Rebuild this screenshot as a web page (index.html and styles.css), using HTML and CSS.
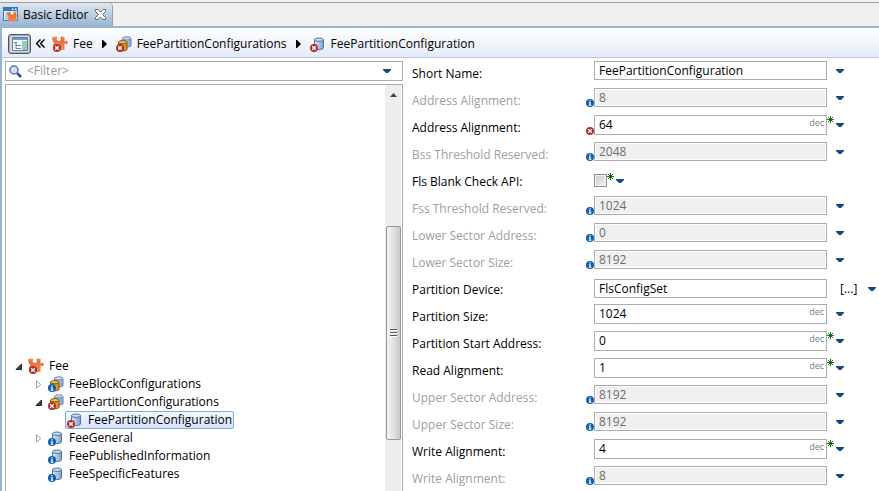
FILE: index.html
```html
<!DOCTYPE html>
<html lang="en">
<head>
<meta charset="utf-8">
<title>Basic Editor</title>
<link rel="stylesheet" href="styles.css">
</head>
<body>
<svg class="defs" aria-hidden="true">
  <defs>
    <linearGradient id="blue" x1="0" x2="1" y1="0" y2="0"><stop offset="0" stop-color="#dce8f7"/><stop offset="1" stop-color="#7d9fcd"/></linearGradient>
    <linearGradient id="gold" x1="0" x2="1" y1="0" y2="0"><stop offset="0" stop-color="#f6c645"/><stop offset="1" stop-color="#c98a12"/></linearGradient>
    <linearGradient id="orange" x1="0" x2="0" y1="0" y2="1"><stop offset="0" stop-color="#e0672f"/><stop offset="1" stop-color="#f58a4e"/></linearGradient>
  </defs>
  <symbol id="error" viewBox="0 0 8 8"><circle cx="4" cy="4" r="4" fill="#b32d2d"/><path d="M2.2 2.2l3.6 3.6M5.8 2.2L2.2 5.8" stroke="#fff" stroke-width="1.3"/></symbol>
  <symbol id="info" viewBox="0 0 8 8"><circle cx="4" cy="4" r="4" fill="#0f5fb4"/><path d="M3.4 1.2h1.300v1.300H3.4zM2.800 3.200h1.900v2.600h.7v1H2.700v-1h.7V4.200h-.6z" fill="#fff"/></symbol>
  <symbol id="puzzle" viewBox="0 0 16 16"><path d="M0 1.500L4 .5l1 .7-.5 2.300L6 5h1.500L9 3.500 8.500 1.200l1-.7L12.500 1v4.500h.7c.4-1 2.600-.9 2.600 1s-2.200 2-2.600 1h-.7V14H9L8 12.500H6.500L5.500 14H1V9l1-.5V6.500L1 6z" fill="url(#orange)"/><path d="M1.500 2.300L4 1.600M10 1.800l1.800.3" stroke="#f9ac7c"/></symbol>
  <symbol id="cyl" viewBox="0 0 16 16"><path d="M4.500 3.500v8.200c0 1.100 2 1.800 4.500 1.800s4.500-.7 4.500-1.800V3.500z" fill="url(#blue)" stroke="#51709f"/><ellipse cx="9" cy="3.700" rx="4.500" ry="1.700" fill="#c9dcf2" stroke="#51709f"/></symbol>
  <symbol id="cyls" viewBox="0 0 16 16"><path d="M6.500 2.500v7c0 1 2 1.500 4.200 1.500s4.300-.5 4.300-1.500v-7z" fill="url(#blue)" stroke="#6884ae"/><ellipse cx="10.750" cy="2.400" rx="4.250" ry="1.600" fill="#c9dcf2" stroke="#6884ae"/><path d="M2.500 6.300v7c0 1 2 1.500 4.200 1.500s4.300-.5 4.300-1.500v-7z" fill="url(#gold)" stroke="#80560f"/><ellipse cx="6.750" cy="6.200" rx="4.250" ry="1.600" fill="#f2c65b" stroke="#80560f"/></symbol>
  <symbol id="puzzle-error" viewBox="0 0 16 16"><use href="#puzzle" width="16" height="16"/><use href="#error" x="1" y="8" width="8" height="8"/></symbol>
  <symbol id="cyl-error" viewBox="0 0 16 16"><use href="#cyl" width="16" height="16"/><use href="#error" x="0" y="8" width="8" height="8"/></symbol>
  <symbol id="cyl-info" viewBox="0 0 16 16"><use href="#cyl" width="16" height="16"/><use href="#info" x="0" y="8" width="8" height="8"/></symbol>
  <symbol id="cyls-error" viewBox="0 0 16 16"><use href="#cyls" width="16" height="16"/><use href="#error" x="0" y="8" width="8" height="8"/></symbol>
  <symbol id="cyls-info" viewBox="0 0 16 16"><use href="#cyls" width="16" height="16"/><use href="#info" x="0" y="8" width="8" height="8"/></symbol>
  <symbol id="star" viewBox="0 0 7 7"><path d="M3.500 0v7M0 3.500h7M1 1l5 5M6 1L1 6" stroke="#137313" stroke-width="1"/></symbol>
  <symbol id="down" viewBox="0 0 8 4"><path d="M0 0h8v1L5 4H3L0 1z" fill="#174a80"/></symbol>
  <symbol id="next" viewBox="0 0 5 8"><path d="M0 0h1l4 4-4 4H0z" fill="#000"/></symbol>
  <symbol id="open" viewBox="0 0 8 9"><path d="M6.500 2v5.500H1z" fill="#404040" stroke="#222"/></symbol>
  <symbol id="closed" viewBox="0 0 8 9"><path d="M1.500.8v7.400L5.800 4.500z" fill="#fff" stroke="#a0a0a0"/></symbol>
</svg>

<header class="tabs">
  <div class="tab">
    <svg class="icon" viewBox="0 0 16 16"><rect x=".5" y=".5" width="14" height="13" fill="#e8f4fc" stroke="#3b78b8"/><path d="M0 0h15v4H0z" fill="#3479bd"/><path d="M9 1.500h1.500v1.500H9zM12 1.500h1.500v1.500H12z" fill="#fff"/><path d="M2 5.500h3v7H2z" fill="#a5d3f0"/><use href="#puzzle" x="4" y="4" width="12" height="12"/></svg>
    <span>Basic Editor</span>
    <button class="close" aria-label="Close"><svg width="11" height="11" viewBox="0 0 11 11"><path d="M.5.500h2.500l2.500 2.500L8 .500h2.500v2L7.500 5.500l3 3v2H8L5.500 8 3 10.500H.500v-2l3-3-3-3z" fill="#fff" stroke="#666"/></svg></button>
  </div>
</header>

<main class="editor">
  <nav class="crumbs">
    <button class="toggle" aria-label="Show tree"><svg width="16" height="14" viewBox="0 0 16 14"><path d="M.5.500h15v13H.500z" fill="#fff" stroke="#6080a8"/><path d="M1 1h14v2H1z" fill="#6f9bd0"/><path d="M10 4h5v9h-5z" fill="#9bcdb4"/><path d="M2 5.500h3M4 6v5.500M4 8.500h5M4 11.500h5" stroke="#5185b8" fill="none"/></svg></button>
    <button class="back" aria-label="Back"><svg width="9" height="9" viewBox="0 0 9 9"><path d="M4.500.5l-4 4 4 4M8.500.5l-4 4 4 4" fill="none" stroke="#000" stroke-width="1.500"/></svg></button>
    <a class="crumb" href="#fee"><svg class="icon"><use href="#puzzle-error"/></svg>Fee</a>
    <svg class="next"><use href="#next"/></svg>
    <a class="crumb" href="#configs"><svg class="icon"><use href="#cyls-error"/></svg>FeePartitionConfigurations</a>
    <svg class="next"><use href="#next"/></svg>
    <a class="crumb" href="#config"><svg class="icon"><use href="#cyl-error"/></svg>FeePartitionConfiguration</a>
  </nav>

  <div class="panes">
    <section class="outline">
      <div class="filter">
        <svg width="13" height="13" viewBox="0 0 13 13"><path d="M8 8l4 4" stroke="#2f4f9c" stroke-width="2.500"/><circle cx="5" cy="5" r="4" fill="#cfe0f6" stroke="#5a78b4" stroke-width="1.500"/><path d="M3 4.500L4.500 3" stroke="#fff"/></svg>
        <input type="text" aria-label="Filter" placeholder="&lt;Filter&gt;">
        <button class="drop" aria-label="Filter history"><svg><use href="#down"/></svg></button>
      </div>
      <div class="treebox">
        <ul class="tree">
          <li id="fee"><svg class="exp"><use href="#open"/></svg><svg class="icon"><use href="#puzzle-error"/></svg><span>Fee</span></li>
          <li class="sub"><svg class="exp"><use href="#closed"/></svg><svg class="icon"><use href="#cyls-info"/></svg><span>FeeBlockConfigurations</span></li>
          <li class="sub" id="configs"><svg class="exp"><use href="#open"/></svg><svg class="icon"><use href="#cyls-error"/></svg><span>FeePartitionConfigurations</span></li>
          <li class="leaf" id="config"><svg class="icon"><use href="#cyl-error"/></svg><span>FeePartitionConfiguration</span></li>
          <li class="sub"><svg class="exp"><use href="#closed"/></svg><svg class="icon"><use href="#cyl-info"/></svg><span>FeeGeneral</span></li>
          <li class="sub"><svg class="exp"></svg><svg class="icon"><use href="#cyl-info"/></svg><span>FeePublishedInformation</span></li>
          <li class="sub"><svg class="exp"></svg><svg class="icon"><use href="#cyl-info"/></svg><span>FeeSpecificFeatures</span></li>
        </ul>
        <div class="scroll">
          <svg class="up" viewBox="0 0 7 4"><path d="M0 4l3.500-4L7 4z" fill="#444"/></svg>
          <div class="thumb"><svg width="7" height="8" viewBox="0 0 7 8"><path d="M0 .500h7M0 3.500h7M0 6.500h7" stroke="#555"/><path d="M0 1.500h7M0 4.500h7M0 7.500h7" stroke="#fff"/></svg></div>
        </div>
      </div>
    </section>
    <form class="form" id="form"></form>
  </div>
</main>
<script src="form.js"></script>
</body>
</html>
```
FILE: form.js
```js
// kind: text, info (read-only default), dec (decimal entry), check, ref
const fields = [
  { label: "Short Name:", value: "FeePartitionConfiguration", kind: "text" },
  { label: "Address Alignment:", value: "8", kind: "info" },
  { label: "Address Alignment:", value: "64", kind: "dec", error: true, star: true },
  { label: "Bss Threshold Reserved:", value: "2048", kind: "info" },
  { label: "Fls Blank Check API:", kind: "check", star: true },
  { label: "Fss Threshold Reserved:", value: "1024", kind: "info" },
  { label: "Lower Sector Address:", value: "0", kind: "info" },
  { label: "Lower Sector Size:", value: "8192", kind: "info" },
  { label: "Partition Device:", value: "FlsConfigSet", kind: "ref" },
  { label: "Partition Size:", value: "1024", kind: "dec" },
  { label: "Partition Start Address:", value: "0", kind: "dec", star: true },
  { label: "Read Alignment:", value: "1", kind: "dec", star: true },
  { label: "Upper Sector Address:", value: "8192", kind: "info" },
  { label: "Upper Sector Size:", value: "8192", kind: "info" },
  { label: "Write Alignment:", value: "4", kind: "dec", star: true },
  { label: "Write Alignment:", value: "8", kind: "info" }
];

document.getElementById("form").innerHTML = fields.map((f, i) => {
  const id = "field" + i;
  const badge = f.error ? "error" : f.kind === "info" ? "info" : "";
  const control = f.kind === "check"
    ? `<input type="checkbox" id="${id}">`
    : `<div class="box"><input type="text" id="${id}" value="${f.value}"${f.kind === "info" ? " disabled" : ""}>${f.kind === "dec" ? '<span class="unit">dec</span>' : ""}</div>`;
  return `<div class="row ${f.kind}">
    <label for="${id}">${f.label}</label>
    <span class="badge">${badge ? `<svg><use href="#${badge}"/></svg>` : ""}</span>
    ${control}
    <span class="tail"><svg class="star">${f.star ? '<use href="#star"/>' : ""}</svg>${f.kind === "ref" ? '<button type="button" class="browse">[...]</button>' : ""}<button type="button" class="drop" aria-label="Options"><svg><use href="#down"/></svg></button></span>
  </div>`;
}).join("");
```
FILE: styles.css
```css
* { box-sizing: border-box; }
body {
  margin: 0;
  height: 100vh;
  overflow: hidden;
  display: flex;
  flex-direction: column;
  background: #f0f0f0;
  color: #000;
  font: 12px/18px "Open Sans", "Noto Sans", sans-serif;
}
svg { display: block; flex: none; }
.defs { position: absolute; width: 0; height: 0; }
button { border: 0; padding: 0; background: none; font: inherit; color: inherit; flex: none; }
input { font: inherit; color: inherit; margin: 0; }
.icon { width: 16px; height: 16px; }

.tabs {
  flex: none;
  margin-top: 2px;
  border-top: 1px solid #a0a0a0;
  border-bottom: 2px solid #99b4d1;
  height: 26px;
  display: flex;
}
.tab {
  display: flex;
  align-items: center;
  gap: 4px;
  height: 23px;
  padding: 0 6px 0 3px;
  border-right: 1px solid #a0a0a0;
  border-radius: 0 4px 0 0;
  background: linear-gradient(#dfe8f2, #99b4d1);
}
.close { margin-left: 3px; }

.editor {
  flex: 1;
  min-height: 0;
  display: flex;
  flex-direction: column;
  border-left: 2px solid #99b4d1;
  background: #fff;
}
.crumbs {
  flex: none;
  display: flex;
  align-items: center;
  height: 30px;
  padding: 2px 0 0 6px;
  border-bottom: 1px solid #b4cbe6;
  background: linear-gradient(#fff, #e4ebf6);
}
.toggle {
  display: grid;
  place-items: center;
  width: 23px;
  height: 20px;
  border: 1px solid #555;
  border-radius: 3px;
  background: #d5dae2;
  box-shadow: inset 0 0 0 1px #a9adb4;
}
.back { margin: 0 7px 0 5px; }
.crumb { display: flex; align-items: center; gap: 5px; color: inherit; text-decoration: none; }
.next { width: 5px; height: 8px; margin: 0 9px; }

.panes {
  flex: 1;
  min-height: 0;
  display: grid;
  grid-template-columns: 398fr 467fr;
  gap: 9px;
  padding: 3px 0 0 3px;
}
.outline { display: flex; flex-direction: column; gap: 3px; min-height: 0; }
.filter {
  flex: none;
  display: flex;
  align-items: center;
  height: 20px;
  padding: 0 11px 0 3px;
  border: 1px solid #abadb3;
}
.filter input { flex: 1; min-width: 0; border: 0; padding: 0 5px; outline: 0; height: 18px; }
.filter input::placeholder { color: #999; opacity: 1; }
.drop svg { width: 8px; height: 4px; }

.treebox {
  flex: 1;
  min-height: 0;
  display: flex;
  border: 1px solid #abadb3;
  border-bottom: 0;
}
.tree {
  flex: 1;
  display: flex;
  flex-direction: column;
  justify-content: flex-end;
  margin: 0;
  padding: 0 0 10px 9px;
  list-style: none;
}
.tree li { display: flex; align-items: center; height: 18px; gap: 5px; }
.tree .sub { padding-left: 20px; }
.exp { width: 8px; height: 9px; }
#config {
  align-self: flex-start;
  margin-left: 50px;
  padding: 0 1px;
  border: 1px solid #84acdd;
  border-radius: 2px;
  background: linear-gradient(#f2f7fe, #d5e5fb);
}
.scroll { width: 16px; margin-right: 1px; background: #eee; display: flex; flex-direction: column; align-items: center; }
.up { width: 7px; height: 4px; margin-top: 8px; }
.thumb {
  display: grid;
  place-items: center;
  width: 15px;
  height: 214px;
  margin-top: 129px;
  border: 1px solid #979797;
  border-radius: 2px;
  background: linear-gradient(90deg, #f3f3f3, #e2e2e4 50%, #c8c8cc);
}

.form { min-width: 0; }
.row { display: flex; align-items: flex-start; height: 27px; }
.row label { width: 173px; padding-top: 4px; flex: none; }
.row.info label { color: #a0a0a0; }
.badge { width: 9px; padding: 11px 0 0 1px; flex: none; }
.badge svg { width: 8px; height: 8px; }
.dec .badge { padding-top: 12px; }
.box {
  flex: 1;
  min-width: 0;
  display: flex;
  height: 19px;
  border: 1px solid #abadb3;
}
.dec .box { height: 20px; }
.box input { flex: 1; min-width: 0; height: 17px; border: 0; padding: 0 4px; background: none; outline: 0; }
.info .box { padding: 1px; }
.info .box input { height: 15px; padding: 0 3px; background: #f0f0f0; color: #6d6d6d; }
.unit { padding-right: 2px; font-size: 9px; line-height: 14px; color: #808080; }
.tail { width: 52px; display: flex; flex: none; align-items: flex-start; }
.star { width: 7px; height: 7px; margin: 1px 2px 0 0; }
.tail .drop { padding-top: 8px; }
.ref .box { margin-top: 2px; }
.ref .tail { padding-top: 2px; }
.browse { margin: 1px 11px 0 4px; }
.row input[type="checkbox"] {
  appearance: none;
  width: 13px;
  height: 13px;
  margin: 5px 0 0;
  border: 1px solid #8e8f8f;
  background: linear-gradient(135deg, #c5c9ce, #f5f5f5);
  box-shadow: inset 0 0 0 1px #f4f4f4;
}
.check .star { margin-top: 4px; }
.check .drop { padding-top: 10px; }
```
